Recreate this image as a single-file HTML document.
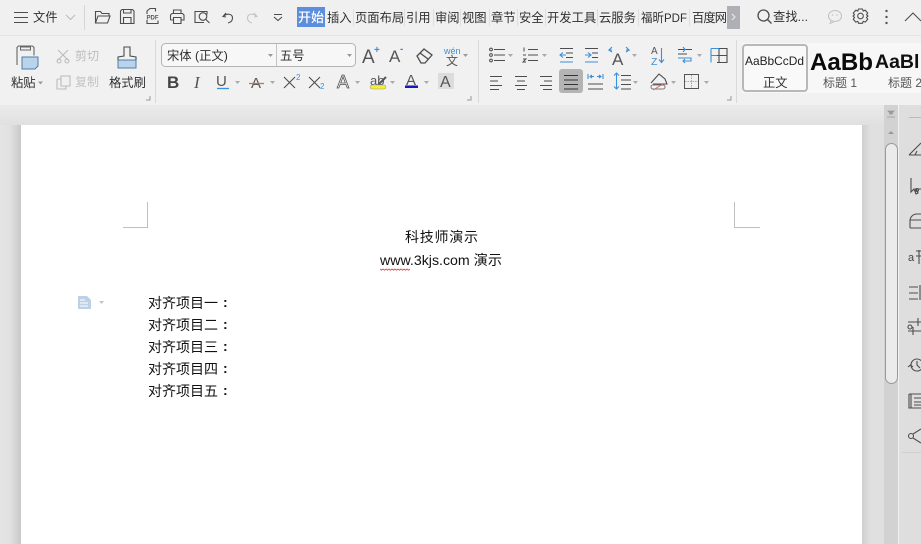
<!DOCTYPE html>
<html><head><meta charset="utf-8"><style>
html,body{margin:0;padding:0;background:#fff}
body{width:921px;height:544px;overflow:hidden;position:relative}
svg{position:absolute;left:0;top:0;display:block}
text{font-family:"Liberation Sans","Noto Sans CJK SC",sans-serif;font-size:12px;fill:#3a3a3a}
.s{fill:none;stroke:#4d4d4d;stroke-width:1.1}
.b{fill:none;stroke:#3f8fd6;stroke-width:1.1}
.l{fill:none;stroke:#bbb;stroke-width:1.1}
.d{font-size:14px;fill:#111}
.t{font-size:12.3px;fill:#2f2f2f}
</style></head><body>
<svg width="921" height="544" viewBox="0 0 921 544" xmlns="http://www.w3.org/2000/svg">
<defs>
<linearGradient id="gl" x1="0" x2="1" y1="0" y2="0"><stop offset="0" stop-color="#e4e4e4"/><stop offset=".45" stop-color="#e2e2e2"/><stop offset="1" stop-color="#c9c9c9"/></linearGradient>
<linearGradient id="gr" x1="0" x2="1" y1="0" y2="0"><stop offset="0" stop-color="#d0d0d0"/><stop offset=".4" stop-color="#e0e0e0"/><stop offset="1" stop-color="#dfdfdf"/></linearGradient>
<linearGradient id="gt" x1="0" x2="0" y1="0" y2="1"><stop offset="0" stop-color="#ebebeb"/><stop offset="1" stop-color="#e0e0e0"/></linearGradient>
</defs>
<!-- backgrounds -->
<rect width="921" height="36" fill="#f0f0f0"/>
<rect y="36" width="921" height="69" fill="#f1f1f1"/>
<rect y="35" width="921" height="1" fill="#e4e4e4"/>
<rect y="105" width="921" height="20" fill="url(#gt)"/>
<rect y="125" width="21" height="419" fill="url(#gl)"/>
<rect x="862" y="125" width="22" height="419" fill="url(#gr)"/>
<rect x="884" y="105" width="14" height="439" fill="#d2d2d2"/>
<rect x="898" y="105" width="23" height="439" fill="#dedede"/>
<rect x="898" y="105" width="1" height="439" fill="#f2f2f2"/>
<rect x="21" y="125" width="841" height="419" fill="#fff"/>

<!-- top row -->
<path class="s" d="M14 12.500h14M14 17.500h14M14 22.500h14"/>
<text x="33" y="21.500" class="t">文件</text>
<path class="l" d="M66 15l4.500 4.500L75 15"/>
<path d="M84.500 5v25" stroke="#d6d6d6"/>
<path class="s" d="M95.500 23V11.500h5l1.500 2h7v2.500M95.500 23l2.500-7h12l-2.500 7z"/>
<path class="s" d="M120.500 23.500v-12.500l1.500-1.500h10.500l1.500 1.500v12.500zM123.500 23.500v-6h7.500v6M123.500 9.500v3.500h7.500v-3.500"/>
<path class="s" d="M147 14v-3l3-2.500h5.500v3M147 20v3.500h11v-3"/>
<rect x="146" y="14" width="13" height="6" fill="#f0f0f0"/>
<text x="146.500" y="19.500" style="font-size:6px;font-weight:bold;fill:#555">PDF</text>
<path class="s" d="M173.500 14v-4h7.500v4M170.500 20v-5l1.500-1.500h10.500l1.500 1.500v5h-3M173.500 20h-3M173.500 17.500h7.500v6h-7.500z"/>
<path class="s" d="M204 22.500h-9v-11h12v3"/>
<circle class="s" cx="203" cy="16.500" r="3.800"/><path class="s" d="M206 19.500l3.500 3.500"/>
<path class="s" d="M226 13l-3 3.500 3 .5M223.500 16.500c3-3.500 9-3 9 1.500 0 3-2.500 4.500-4.500 5"/>
<path class="l" d="M254 13l3 3.500-3 .5M256.500 16.500c-3-3.500-9-3-9 1.500 0 3 2.500 4.500 4.500 5" style="stroke:#c4c4c4"/>
<path class="s" d="M274 14.500h8M274 17l4 3.500 4-3.500"/>

<!-- tabs -->
<rect x="297" y="7" width="28" height="20" fill="#5c8ede"/>
<text x="298" y="22" style="font-size:13px;font-weight:500;fill:#fff">开始</text>
<text x="327" y="22" class="t">插入</text>
<text x="355" y="22" class="t">页面布局</text>
<text x="406" y="22" class="t">引用</text>
<text x="435" y="22" class="t">审阅</text>
<text x="462" y="22" class="t">视图</text>
<text x="491" y="22" class="t">章节</text>
<text x="519" y="22" class="t">安全</text>
<text x="547" y="22" class="t">开发工具</text>
<text x="599" y="22" class="t">云服务</text>
<text x="641" y="22" class="t" textLength="46" lengthAdjust="spacingAndGlyphs">福昕PDF</text>
<text x="692" y="22" class="t" textLength="35">百度网</text>
<path d="M353.500 9v17M404.500 9v17M433.500 9v17M460.500 9v17M489.500 9v17M517.500 9v17M545.500 9v17M597.500 9v17M638.500 9v17M689.500 9v17" stroke="#dedede"/>
<rect x="727" y="6" width="13" height="23" fill="#aeb0b6"/>
<path d="M732 14l3 3-3 3" fill="none" stroke="#eee"/>
<circle class="s" cx="763.500" cy="15.500" r="5.500" style="stroke-width:1.300"/><path class="s" d="M767.500 19.500l4 4" style="stroke-width:1.300"/>
<text x="773" y="21" class="t" textLength="35">查找...</text>
<ellipse cx="835" cy="16" rx="6.500" ry="5.500" fill="none" stroke="#c2c2c2" stroke-width="1.100"/>
<path d="M831 21l-1 2.500 3.500-1.500" fill="none" stroke="#c2c2c2"/>
<circle cx="832.500" cy="15" r=".8" fill="#c2c2c2"/><circle cx="837" cy="15" r=".8" fill="#c2c2c2"/>
<circle class="s" cx="860.500" cy="16" r="2.800"/>
<path class="s" d="M858.500 9h4l.7 2 2-.8 2.500 2.800-1.200 1.800 1.500 1.200v0l-1.500 1.500 1.200 1.800-2.500 2.800-2-.8-.7 2h-4l-.7-2-2 .8-2.500-2.800 1.200-1.800-1.500-1.500 1.500-1.200-1.200-1.800 2.500-2.800 2 .8z"/>
<circle cx="886.500" cy="11" r="1.200" fill="#555"/><circle cx="886.500" cy="17" r="1.200" fill="#555"/><circle cx="886.500" cy="23" r="1.200" fill="#555"/>
<path class="s" d="M905 21l8-8 8 8"/>

<!-- clipboard group -->
<path class="s" d="M17 65v-17.500l1.500-1.500h14l1.500 1.500v8" style="stroke:#666"/>
<rect x="20.500" y="47" width="10" height="3" fill="#f1f1f1" stroke="#666"/>
<path d="M22 57h16v9l-3 3H22z" fill="#b9d3ea" stroke="#4f7ea8"/>
<text x="11" y="87" class="t">粘贴</text>
<path d="M38 81.500h5l-2.500 3z" fill="#999"/>
<path class="l" d="M58 50l10 10M68 50L58 60"/><circle class="l" cx="59" cy="61" r="2"/><circle class="l" cx="67" cy="61" r="2"/>
<text x="75" y="60" style="font-size:12px;fill:#bdbdbd">剪切</text>
<path class="l" d="M61 76h9v10h-9zM57.500 79h3M57 79v10h9v-3"/>
<text x="75" y="86" style="font-size:12px;fill:#c4c4c4">复制</text>
<path d="M118 60h18v8h-18z" fill="#b9d3ea" stroke="#4f7ea8"/>
<path class="s" d="M118 60v-3l6-1v-9h6v9l6 1v3"/>
<text x="109" y="87" class="t">格式刷</text>
<path d="M146 100h4v-4" fill="none" stroke="#999"/>
<path d="M155.500 40v63" stroke="#dadada"/>

<!-- font group -->
<rect x="161.500" y="43.500" width="194" height="23" rx="4" fill="#f7f7f7" stroke="#b4b4b4"/>
<path d="M276.500 44v22" stroke="#c4c4c4"/>
<text x="167" y="60" class="t">宋体 (正文)</text>
<text x="280" y="60" class="t">五号</text>
<path d="M268 54h5l-2.500 3zM347 54h5l-2.500 3z" fill="#999"/>
<text x="362" y="63" style="font-size:19px;fill:#555">A</text><text x="374" y="53" style="font-size:10px;fill:#3f8fd6;font-weight:bold">+</text>
<text x="389" y="62" style="font-size:17px;fill:#555">A</text><text x="400" y="52" style="font-size:10px;fill:#3f8fd6;font-weight:bold">-</text>
<path class="s" d="M417 56l7-7 8 6-7 8h-4zM420 53l8 6" style="stroke-width:1.300"/>
<text x="444" y="54" style="font-size:9px;fill:#3f8fd6">wén</text>
<text x="446" y="65" style="font-size:12px;fill:#555">文</text>
<path d="M463 54h5l-2.500 3z" fill="#999"/>
<path d="M478.500 40v63" stroke="#dadada"/>

<text x="167" y="88" style="font-size:17px;font-weight:bold;fill:#444">B</text>
<text x="194" y="88" style="font-size:17px;font-family:'Liberation Serif',serif;font-style:italic;fill:#555">I</text>
<text x="216" y="86" style="font-size:15px;fill:#555">U</text><path d="M217 88.500h12" stroke="#3f8fd6" stroke-width="1.300"/>
<path d="M235 81h5l-2.500 3z" fill="#aaa"/>
<text x="251" y="88" style="font-size:15px;fill:#555">A</text><path d="M249 83.500h15" stroke="#d56a5a" stroke-width="1.300"/>
<path d="M270 81h5l-2.500 3z" fill="#aaa"/>
<path class="s" d="M284 77l11 11M295 77l-11 11"/><text x="296" y="80" style="font-size:8px;fill:#3f8fd6">2</text>
<path class="s" d="M309 77l11 11M320 77l-11 11"/><text x="320" y="89" style="font-size:8px;fill:#3f8fd6">2</text>
<text x="337" y="88" style="font-size:18px;fill:#f1f1f1;stroke:#555;stroke-width:.8">A</text>
<path d="M355 81h5l-2.500 3z" fill="#aaa"/>
<text x="370" y="85" style="font-size:13px;fill:#555">ab</text>
<path d="M378 85l8-8" stroke="#555" stroke-width="2"/>
<rect x="370" y="85" width="16" height="4" rx="2" fill="#f3ee3a" stroke="#999" stroke-width=".5"/>
<path d="M390 81h5l-2.500 3z" fill="#aaa"/>
<text x="406" y="85" style="font-size:15px;fill:#555">A</text><rect x="405" y="85.500" width="13" height="2.500" fill="#1414c8"/>
<path d="M424 81h5l-2.500 3z" fill="#aaa"/>
<rect x="438" y="73" width="16" height="16" fill="#dcdcdc"/>
<text x="440" y="87" style="font-size:16px;fill:#555">A</text>
<path d="M471 96v4h-4" fill="none" stroke="#999"/>

<!-- paragraph group -->
<g class="s" style="stroke-width:1">
<path d="M494 49.500h11M494 55h11M494 60.500h11"/><circle cx="491" cy="49.500" r="1.400"/><circle cx="491" cy="55" r="1.400"/><circle cx="491" cy="60.500" r="1.400"/>
<path d="M528 49.500h10M528 55h10M528 60.500h10M524 47.500v4M523 55h3M523 59h3l-3 3h3"/>
</g>
<path d="M508 54h5l-2.500 3zM542 54h5l-2.500 3z" fill="#aaa"/>
<path class="s" d="M560 48.500h13M566 53h7M566 57.500h7"/><path class="b" d="M566 55h-6M563 52.500l-3 2.500 3 2.500M560 62h13"/>
<path class="s" d="M585 48.500h13M592 53h6M592 57.500h6"/><path class="b" d="M585 55h6M588 52.500l3 2.500-3 2.500M585 62h13"/>
<text x="612" y="65" style="font-size:17px;fill:#555">A</text><path class="b" d="M612 50h-3l3-3M609 50l3 2M626 50h3l-3-3M629 50l-3 2"/>
<path d="M632 54h5l-2.500 3z" fill="#aaa"/>
<text x="651" y="54" style="font-size:10px;fill:#555">A</text><text x="651" y="65" style="font-size:10.500px;fill:#3f8fd6">Z</text>
<path class="b" d="M661.500 48v14M659 59.500l2.500 3 2.500-3"/>
<path class="s" d="M678 49.500h14M678 54h9"/><path class="b" d="M678 58h13v3h-8M685 59l-2 2 2 2"/><path class="b" d="M683 47l2 2.500-2 2.500"/>
<path d="M697 54h5l-2.500 3z" fill="#aaa"/>
<path class="s" d="M711 48.500h16v14h-10M719 48.500v14M711 55.500h16"/><path class="b" d="M711 48.500v14M711 55.500h6M711 48.500h8"/>

<path class="s" d="M490 76.500h12M490 81h8M490 85.500h12M490 89.500h9" style="stroke-width:1"/>
<path class="s" d="M515 76.500h12M517 81h8M515 85.500h12M517 89.500h8" style="stroke-width:1"/>
<path class="s" d="M540 76.500h12M544 81h8M540 85.500h12M543 89.500h9" style="stroke-width:1"/>
<rect x="559" y="69" width="24" height="24" rx="3" fill="#b4b4b4"/>
<path d="M564 75.500h14M564 80h14M564 84.500h14M564 89h14" stroke="#333" stroke-width="1.100"/>
<path class="s" d="M588 84h15M588 89h15"/><path class="b" d="M588 74v5M603 74v5M590 76.500h4M601 76.500h-4M592 75l-2 1.500 2 1.500M599 75l2 1.500-2 1.500"/>
<path class="s" d="M621 75.500h10M621 80h10M621 84.500h10M621 89h10"/><path class="b" d="M616.500 73v16M614 75.500l2.500-2.500 2.500 2.500M614 86.500l2.500 2.500 2.500-2.500"/>
<path d="M633 81h5l-2.500 3z" fill="#aaa"/>
<path class="s" d="M651 83l8-9 6 5 2 5h-14"/><rect x="651" y="85" width="14" height="4" rx="2" fill="#f5f5f5" stroke="#777"/><path d="M653 90l10-6" stroke="#d56a5a"/>
<path d="M671 81h5l-2.500 3z" fill="#aaa"/>
<rect x="684.500" y="74.500" width="14" height="14" fill="none" stroke="#555"/><path d="M691.500 75v13M685 81.500h13" stroke="#aaa" stroke-dasharray="1.500 1"/>
<path d="M704 81h5l-2.500 3z" fill="#aaa"/>
<path d="M731 96v4h-4" fill="none" stroke="#999"/>
<path d="M736.500 40v63" stroke="#dadada"/>

<!-- styles -->
<rect x="742" y="43" width="179" height="50" fill="#f7f7f7"/>
<rect x="743" y="45" width="64" height="46" rx="3" fill="#f9f9f9" stroke="#b8b8b8" stroke-width="2"/>
<text x="745" y="65" style="font-size:12px;fill:#222" textLength="59" lengthAdjust="spacingAndGlyphs">AaBbCcDd</text>
<text x="763" y="87" class="t">正文</text>
<text x="810" y="70" style="font-size:24px;font-weight:bold;fill:#0a0a0a" textLength="63" lengthAdjust="spacingAndGlyphs">AaBb</text>
<text x="823" y="87" style="font-size:12px;fill:#555">标题 1</text>
<text x="875" y="68" style="font-size:19.500px;font-weight:bold;fill:#111">AaBl</text>
<text x="888" y="87" style="font-size:12px;fill:#555">标题 2</text>

<!-- doc corners -->
<path d="M123 227.500h24.500V202" fill="none" stroke="#bfbfbf"/>
<path d="M734.500 202v25.500H760" fill="none" stroke="#bfbfbf"/>

<!-- doc text -->
<text x="405" y="242" class="d" textLength="73">科技师演示</text>
<text x="380" y="265" class="d" textLength="122" lengthAdjust="spacingAndGlyphs">www.3kjs.com 演示</text>
<path d="M380 269l1.500 1.200 1.500-1.200 1.500 1.200 1.500-1.200 1.500 1.200 1.500-1.200 1.500 1.200 1.500-1.200 1.500 1.200 1.500-1.200 1.500 1.200 1.500-1.200 1.500 1.200 1.500-1.200 1.500 1.200 1.500-1.200 1.500 1.200 1.500-1.200 1.500 1.200 1.500-1.200" fill="none" stroke="#d33" stroke-width=".8"/>
<text x="148" y="308" class="d">对齐项目一</text><text x="223" y="307" class="d" style="font-weight:bold">:</text>
<text x="148" y="330" class="d">对齐项目二</text><text x="223" y="329" class="d" style="font-weight:bold">:</text>
<text x="148" y="352" class="d">对齐项目三</text><text x="223" y="351" class="d" style="font-weight:bold">:</text>
<text x="148" y="374" class="d">对齐项目四</text><text x="223" y="373" class="d" style="font-weight:bold">:</text>
<text x="148" y="396" class="d">对齐项目五</text><text x="223" y="395" class="d" style="font-weight:bold">:</text>
<!-- para icon -->
<path d="M78 296h9l4 4v9H78z" fill="#bcd0e6"/>
<path d="M80 300h5M80 303h8M80 306h8" stroke="#fff"/>
<path d="M99 301h5l-2.500 3z" fill="#c4c4c4"/>

<!-- scrollbar -->
<path d="M888 111h6l-3 3zM887 117h8M889 114h4" fill="#999" stroke="#999" stroke-width=".8"/>
<path d="M888 134h6l-3-3z" fill="#999"/>
<rect x="885.500" y="143.500" width="12" height="240" rx="6" fill="#ebebeb" stroke="#999"/>

<!-- right panel icons -->
<path d="M909 117.500h12" stroke="#bbb"/>
<path class="s" d="M909 155l12-12M909 155h12M915 155l2-4"/>
<path class="s" d="M911 178v14l3-3 2 5 2-1-2-4h5"/><circle class="s" cx="917" cy="190" r="1.500"/>
<path class="s" d="M910 228v-7c0-4 3-7 7-7h4M910 220h11M910 228h11"/>
<text x="908" y="261" style="font-size:11px;fill:#444">a</text><path class="s" d="M916 256h5M916 251h5M919 250v14"/>
<path class="s" d="M909 287h9M909 293h9M909 299h9M920 285v15"/>
<path class="s" d="M908 322h13M908 331h13M918 318v8M913 327v8"/><circle class="s" cx="910" cy="327" r="2"/>
<circle class="s" cx="917" cy="365" r="6"/><path class="s" d="M917 361v4l3 3M908 367l2.500-2 2.500 2"/>
<path class="s" d="M909 394h12M909 394v14h12M911 394v14M914 398h7M914 402h7M914 405h7"/>
<circle class="s" cx="911" cy="436" r="2.500"/><path class="s" d="M913 434l8-5M913 438l8 5"/>
<path d="M902 452.500h19" stroke="#d0d0d0"/>
</svg>
</body></html>
